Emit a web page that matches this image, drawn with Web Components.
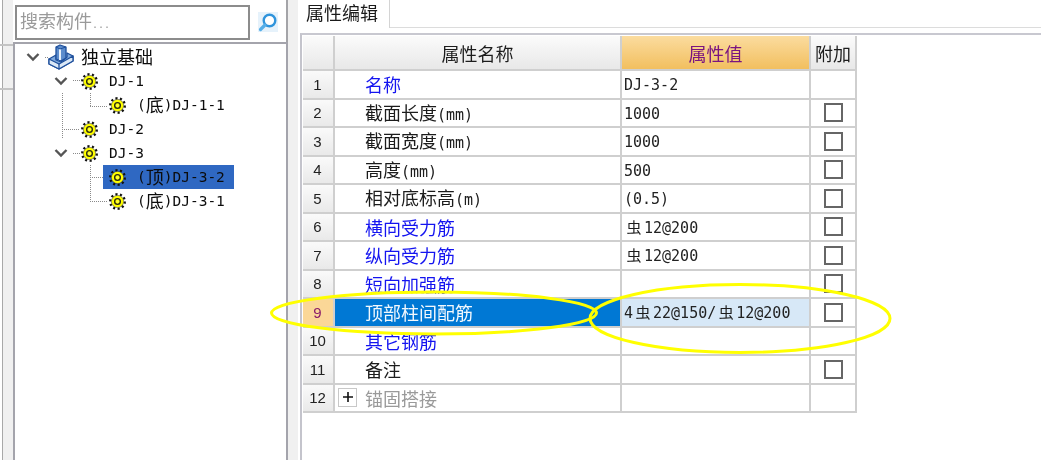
<!DOCTYPE html>
<html lang="zh">
<head>
<meta charset="utf-8">
<title>属性编辑</title>
<style>
html,body{margin:0;padding:0;background:#fff}
body{width:1041px;height:460px;overflow:hidden;font-family:"Noto Sans CJK SC","Liberation Sans",sans-serif;font-size:18px;color:#1a1a1a}
</style>
</head>
<body>
<app-shell>
  <tree-panel slot="left">
    <search-box placeholder="搜索构件..."></search-box>
    <tree-node slot="tree" label="独立基础" icon="root" twisty>
      <tree-node label="DJ-1" twisty>
        <tree-node label="(底)DJ-1-1"></tree-node>
      </tree-node>
      <tree-node label="DJ-2" spacer></tree-node>
      <tree-node label="DJ-3" twisty>
        <tree-node label="(顶)DJ-3-2" selected></tree-node>
        <tree-node label="(底)DJ-3-1"></tree-node>
      </tree-node>
    </tree-node>
  </tree-panel>
  <prop-panel slot="right" title-text="属性编辑">
    <prop-grid>
      <prop-row header name="属性名称" value="属性值" extra="附加"></prop-row>
      <prop-row no="1" name="名称" value="DJ-3-2" link></prop-row>
      <prop-row no="2" name="截面长度(mm)" value="1000" check></prop-row>
      <prop-row no="3" name="截面宽度(mm)" value="1000" check></prop-row>
      <prop-row no="4" name="高度(mm)" value="500" check></prop-row>
      <prop-row no="5" name="相对底标高(m)" value="(0.5)" check></prop-row>
      <prop-row no="6" name="横向受力筋" value="虫12@200" check link></prop-row>
      <prop-row no="7" name="纵向受力筋" value="虫12@200" check link></prop-row>
      <prop-row no="8" name="短向加强筋" value="" check link></prop-row>
      <prop-row no="9" name="顶部柱间配筋" value="4虫22@150/虫12@200" check selected></prop-row>
      <prop-row no="10" name="其它钢筋" value="" link></prop-row>
      <prop-row no="11" name="备注" value="" check></prop-row>
      <prop-row no="12" name="锚固搭接" value="" muted plus></prop-row>
    </prop-grid>
  </prop-panel>
  <ink-marks slot="overlay"></ink-marks>
</app-shell>

<script>
const mix = t => t.replace(/[\x00-\x7f]+/g, m => `<span class="l">${m}</span>`).replace(/虫/g, `<span class="bar">虫</span>`);
const LATIN = `.l{font-family:"DejaVu Sans Mono",monospace;font-size:var(--latin,15px);vertical-align:var(--lift,0)}
  .bar{display:inline-block;width:20px;text-align:center;font-size:15px}`;

function gearSvg(){
  return `<svg width="19" height="19" viewBox="-9 -9 18 18" aria-hidden="true">
    <circle r="6.9" fill="none" stroke="#111" stroke-width="2.2" stroke-dasharray="2 2.33"/>
    <circle r="5.8" fill="#ffff00"/>
    <circle r="5.8" fill="none" stroke="#333" stroke-width=".5"/>
    <circle r="2.7" fill="none" stroke="#2a2a10" stroke-width="1.3"/>
    <circle r="1.2" fill="#ffff40"/>
  </svg>`;
}
function rootSvg(){
  return `<svg width="26" height="26" viewBox="0 0 26 26" aria-hidden="true">
    <path d="M1 15 L8 11 L8 16 L13 18 L19 13 L19 9 L25 12 L25 17 L11 25 L1 20Z" fill="#7fa9dc" stroke="#1e4f9c" stroke-width="1.3" stroke-linejoin="round"/>
    <path d="M1 15 L11 20 L25 12 L25 17 L11 25 L1 20Z" fill="#dbe8f6" stroke="#1e4f9c" stroke-width="1.3" stroke-linejoin="round"/>
    <path d="M11 20 L11 25" stroke="#1e4f9c" stroke-width="1.3"/>
    <path d="M8 3 L12 1 L18 3 L18 14 L13 17 L8 15Z" fill="#5c8ccc" stroke="#1e4f9c" stroke-width="1.3" stroke-linejoin="round"/>
    <path d="M12 5 L12 16" stroke="#e8f0fa" stroke-width="2"/>
    <path d="M8 3 L12 5 L18 3" fill="none" stroke="#1e4f9c" stroke-width="1"/>
  </svg>`;
}

class AppShell extends HTMLElement{
  constructor(){
    super();
    this.attachShadow({mode:"open"}).innerHTML = `<style>
      :host{display:flex;position:relative;width:1041px;height:460px;overflow:hidden;filter:blur(.35px)}
      .gutter{flex:none;width:13px;background:linear-gradient(90deg,#fff 0,#fff 2px,#a8a8a8 2px,#a8a8a8 3px,#f0f0f0 3px);position:relative}
      .gutter i{display:block;height:2px;background:#c4c4c4}
      .gutter i:first-child{margin-top:44px}
      .gutter i:last-child{margin-top:42px}
      .left{flex:none;width:275px;display:flex}
      .split{flex:none;width:10px;background:#f0f0f0}
      .right{flex:1;min-width:0;display:flex}
      ::slotted(tree-panel),::slotted(prop-panel){flex:1}
    </style>
    <div class="gutter"><i></i><i></i></div>
    <div class="left"><slot name="left"></slot></div>
    <div class="split"></div>
    <div class="right"><slot name="right"></slot></div>
    <slot name="overlay"></slot>`;
  }
}

class TreePanel extends HTMLElement{
  constructor(){
    super();
    this.attachShadow({mode:"open"}).innerHTML = `<style>
      :host{display:flex;flex-direction:column;background:#fff;min-width:0}
      .top{flex:none;height:42px;box-sizing:border-box;padding:5px 0 0 2px;border-right:2px solid #a4a4a8}
      .tree{flex:1;position:relative;border:2px solid #a4a4ac;border-bottom:0;padding:1px 0 0 6px;background:#fff}
      .lines{position:absolute;left:-15px;top:-44px;width:300px;height:260px;pointer-events:none}
      .rows{position:relative}
    </style>
    <div class="top"><slot></slot></div>
    <div class="tree">
      <svg class="lines" viewBox="0 0 300 260" aria-hidden="true">
        <path d="M45 57.5H49 M73 80.5H80 M62.5 93V139 M62 129.5H80 M90.5 93V106 M90 106.5H108 M73 153.5H80 M90.5 165V201 M90 177.5H108 M90 201.5H108" fill="none" stroke="#8a8a8a" stroke-dasharray="1 1" stroke-width="1"/>
      </svg>
      <div class="rows"><slot name="tree"></slot></div>
    </div>`;
  }
}

class SearchBox extends HTMLElement{
  constructor(){
    super();
    const ph = this.getAttribute("placeholder")||"";
    this.attachShadow({mode:"open"}).innerHTML = `<style>
      :host{display:flex;align-items:flex-start;--latin:10px}
      .field{width:235px;height:35px;box-sizing:border-box;border:2px solid #8c8c8c;background:#fff;display:flex;align-items:center;padding:0 0 4px 3px;color:#9a9a9a;font-size:18px;line-height:1;white-space:nowrap}
      ${LATIN}
      .btn{width:20px;height:20px;margin:7px 0 0 8px;background:#e6f2fb;display:block}
    </style>
    <div class="field"><span>${mix(ph)}</span></div>
    <svg class="btn" viewBox="0 0 20 20" aria-hidden="true">
      <circle cx="11.5" cy="8.5" r="5.8" fill="#fff" stroke="#2f94dc" stroke-width="2.4"/>
      <path d="M7 13 L2.5 17.5" stroke="#55aee8" stroke-width="3.2" stroke-linecap="round"/>
    </svg>`;
  }
}

class TreeNode extends HTMLElement{
  constructor(){
    super();
    const label = this.getAttribute("label");
    const root = this.getAttribute("icon")==="root";
    const tw = this.hasAttribute("twisty");
    const sel = this.hasAttribute("selected");
    this.attachShadow({mode:"open"}).innerHTML = `<style>
      :host{display:block;--latin:14.5px;--lift:2px}
      .row{display:flex;align-items:center;height:24px;line-height:1;white-space:nowrap}
      .tw{flex:none;width:24px;height:24px;display:flex;align-items:center;justify-content:center}
      .item{display:flex;align-items:center;height:24px;margin-left:2px;padding:0 9px 0 6px;position:relative}
      .item.sel{background:#2f68c2}
      .ic{flex:none;width:16px;height:24px;display:flex;align-items:center;justify-content:center;overflow:visible}
      .ic svg{flex:none}
      .tx{margin:0 0 2px 12px;color:#0c0c0c}
      ${LATIN}
      .kids{padding-left:28px}
    </style>
    <div class="row">
      <div class="tw">${tw?`<svg width="14" height="10" viewBox="0 0 14 10" aria-hidden="true"><path d="M1.5 2 L7 7.5 L12.5 2" fill="none" stroke="#555" stroke-width="2.4"/></svg>`:""}</div>
      <div class="item${sel?" sel":""}">
        <div class="ic">${root?rootSvg():gearSvg()}</div>
        <div class="tx">${mix(label)}</div>
      </div>
    </div>
    <div class="kids"><slot></slot></div>`;
  }
}

class PropPanel extends HTMLElement{
  constructor(){
    super();
    this.attachShadow({mode:"open"}).innerHTML = `<style>
      :host{display:flex;flex-direction:column;min-width:0;background:#fff}
      .bar{flex:none;height:28px;display:flex;background:#fff}
      .tab{flex:none;width:92px;height:28px;box-sizing:border-box;padding-left:8px;border-right:1px solid #d4d4d4;line-height:25px;font-size:18px;color:#1a1a1a}
      .rest{flex:1;border-bottom:1px solid #dcdcdc}
      .body{flex:1;margin:5px 0 0 2px;border-top:2px solid #c8c8d0;border-left:2px solid #c4c4cc;padding:1px 0 0 1px}
    </style>
    <div class="bar"><div class="tab">${this.getAttribute("title-text")}</div><div class="rest"></div></div>
    <div class="body"><slot></slot></div>`;
  }
}

class PropGrid extends HTMLElement{
  constructor(){
    super();
    this.attachShadow({mode:"open"}).innerHTML = `<style>:host{display:block;width:554px}</style><slot></slot>`;
  }
}

class PropRow extends HTMLElement{
  constructor(){
    super();
    const a = n => this.getAttribute(n)||"";
    const h = n => this.hasAttribute(n);
    const cls = [h("header")?"head":"",h("selected")?"sel":"",h("link")?"link":"",h("muted")?"muted":""].join(" ");
    let body;
    if(h("header")){
      body = `<div class="c no"></div><div class="c nm">${a("name")}</div><div class="c val">${a("value")}</div><div class="c ex">${a("extra")}</div>`;
    }else{
      body = `<div class="c no">${a("no")}</div>
        <div class="c nm">${h("plus")?`<span class="plus"><svg width="12" height="12" viewBox="0 0 12 12" aria-hidden="true"><path d="M6 1V11M1 6H11" stroke="#111" stroke-width="1.6"/></svg></span>`:""}<span class="t">${mix(a("name"))}</span></div>
        <div class="c val"><span>${mix(a("value"))}</span></div>
        <div class="c ex">${h("check")?`<span class="box"></span>`:""}</div>`;
    }
    this.attachShadow({mode:"open"}).innerHTML = `<style>
      :host{display:block}
      .r{display:grid;grid-template-columns:32px 287px 189px 46px;height:28.5px;line-height:1;white-space:nowrap;font-size:18px;color:#1c1c1c}
      .r.head{height:35px}
      .c{box-sizing:border-box;border-right:2px solid #cfcfcf;border-bottom:2px solid #cfcfcf;display:flex;align-items:center;min-width:0;background:#fff}
      .no{justify-content:center;background:linear-gradient(#fafafa,#e9e9e9);font:15px "Liberation Sans",sans-serif;padding-right:1px;color:#222}
      .nm{padding-left:30px;position:relative}
      .val{padding:0 0 2px 2px}
      .ex{justify-content:center}
      ${LATIN}
      .val .l{color:#222}
      .box{display:block;width:19px;height:19px;box-sizing:border-box;border:2px solid #666;background:#fff}
      .plus{position:absolute;left:3px;top:50%;margin-top:-10px;width:19px;height:19px;box-sizing:border-box;border:1px solid #c8c8c8;display:flex;align-items:center;justify-content:center}
      .link .nm{color:#1414f0}
      .muted .nm{color:#9a9a9a}
      .sel .no{background:#fbd797;color:#8a1c6a}
      .sel .nm{background:#0078d4;color:#f2f8fd}
      .sel .val{background:#d7e8f7}
      .head .c{background:linear-gradient(#fbfbfb,#e8e8e8)}
      .head .nm{justify-content:center;padding-left:0}
      .head .val{background:linear-gradient(#fbdc9f,#f2bf5f);color:#7a1480;justify-content:center;padding:0}
    </style>
    <div class="r ${cls}">${body}</div>`;
  }
}

class InkMarks extends HTMLElement{
  constructor(){
    super();
    this.attachShadow({mode:"open"}).innerHTML = `<style>
      :host{position:absolute;left:0;top:0;width:1041px;height:460px;pointer-events:none}
      svg{display:block}
    </style>
    <svg width="1041" height="460" viewBox="0 0 1041 460" aria-hidden="true">
      <ellipse cx="434" cy="313" rx="162.5" ry="21" fill="none" stroke="#ffff00" stroke-width="3"/>
      <ellipse cx="740" cy="318.5" rx="150" ry="34" fill="none" stroke="#ffff00" stroke-width="3"/>
    </svg>`;
  }
}

customElements.define("app-shell",AppShell);
customElements.define("tree-panel",TreePanel);
customElements.define("search-box",SearchBox);
customElements.define("tree-node",TreeNode);
customElements.define("prop-panel",PropPanel);
customElements.define("prop-grid",PropGrid);
customElements.define("prop-row",PropRow);
customElements.define("ink-marks",InkMarks);
</script>
</body>
</html>
